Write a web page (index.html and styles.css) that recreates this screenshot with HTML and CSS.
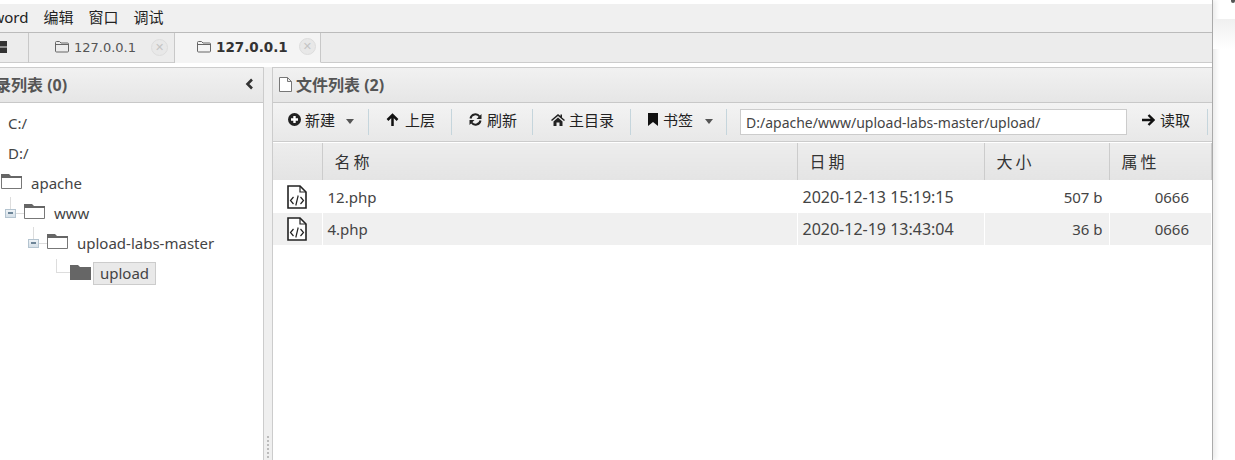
FILE: index.html
```html
<!DOCTYPE html>
<html lang="zh-cn">
<head>
    <meta charset="UTF-8">
    <title>AntSword</title>
    <link rel="stylesheet" href="styles.css">
</head>
<body>
    <svg class="defs" width="0" height="0">
        <symbol id="i-folder" viewBox="0 0 21 16"><path d="M.5 15.500V1.500h7l2 2h11v12z" fill="#fff" stroke="#777"/><path d="M0 1h8l2 2h11v2H0z" fill="#666"/></symbol>
        <symbol id="i-folder-full" viewBox="0 0 21 16"><path d="M0 1h8l2 2h11v13H0z" fill="#666"/></symbol>
        <symbol id="i-tab-folder" viewBox="0 0 14 12"><path d="M.5 10V1.500q0-1 1-1h3l1.500 1.500h6.500q1 0 1 1V10q0 1-1 1h-11q-1 0-1-1zM.5 3.500H13" fill="none" stroke="#666"/></symbol>
        <symbol id="i-code" viewBox="0 0 20 24"><path d="M1 1h12l6 6v16H1z" fill="#fff" stroke="#222" stroke-width="1.600"/><path d="M13 1v6h6" fill="none" stroke="#222" stroke-width="1.200"/><path d="M6.500 12l-3 3.500 3 3.500M13.500 12l3 3.500-3 3.500M11.200 10.500l-2.400 10" fill="none" stroke="#222" stroke-width="1.200"/></symbol>
    </svg>

    <div class="corner"></div>
    <div class="side-strip"></div>
    <div class="app">
        <div class="menubar">
            <span class="menu-item menu-first">AntSword</span>
            <span class="menu-item">编辑</span>
            <span class="menu-item">窗口</span>
            <span class="menu-item">调试</span>
        </div>

        <div class="tabbar">
            <div class="tab tab-home">
                <svg width="7" height="12" viewBox="0 0 7 12"><path d="M0 0h7v5.500H0zM0 6.500h7V12H0z" fill="#333"/></svg>
            </div>
            <div class="tab tab-plain">
                <svg class="tab-icon" width="14" height="12"><use href="#i-tab-folder"/></svg>
                <span>127.0.0.1</span>
                <span class="tab-close">✕</span>
            </div>
            <div class="tab tab-active">
                <svg class="tab-icon" width="14" height="12"><use href="#i-tab-folder"/></svg>
                <b>127.0.0.1</b>
                <span class="tab-close">✕</span>
            </div>
        </div>

        <div class="workspace">
            <div class="panel-left">
                <div class="panel-head head-left">
                    <span>目录列表 (0)</span>
                    <svg class="collapse" width="9" height="12" viewBox="0 0 9 12"><path d="M7 1.500L2.500 6 7 10.500" fill="none" stroke="#333" stroke-width="2.600"/></svg>
                </div>
                <div class="tree">
                    <div class="drive">C:/</div>
                    <div class="drive">D:/</div>
                    <div class="node">
                        <svg class="folder" width="21" height="16"><use href="#i-folder"/></svg>
                        <span class="node-name">apache</span>
                    </div>
                    <div class="node level-1">
                        <span class="joint"></span>
                        <svg class="folder" width="21" height="16"><use href="#i-folder"/></svg>
                        <span class="node-name">www</span>
                    </div>
                    <div class="node level-2">
                        <span class="joint"></span>
                        <svg class="folder" width="21" height="16"><use href="#i-folder"/></svg>
                        <span class="node-name">upload-labs-master</span>
                    </div>
                    <div class="node level-3">
                        <span class="elbow"></span>
                        <svg class="folder" width="21" height="16"><use href="#i-folder-full"/></svg>
                        <span class="node-name node-selected">upload</span>
                    </div>
                </div>
            </div>

            <div class="splitter"><span class="grip"></span></div>

            <div class="panel-right">
                <div class="panel-head head-right">
                    <svg width="13" height="15" viewBox="0 0 13 15"><path d="M.5.500h8l4 4v10H.5zM8.500.500v4h4" fill="#fff" stroke="#777"/></svg>
                    <span>文件列表 (2)</span>
                </div>

                <div class="toolbar">
                    <div class="tool tool-new">
                        <svg width="13" height="13" viewBox="0 0 13 13"><circle cx="6.500" cy="6.500" r="6.500" fill="#222"/><path d="M6.500 3v7M3 6.500h7" stroke="#fff" stroke-width="2.400"/></svg>
                        <span>新建</span>
                        <i class="caret"></i>
                    </div>
                    <div class="tool tool-up">
                        <svg width="13" height="13" viewBox="0 0 13 13"><path d="M6.500 13V2M1.500 7l5-5 5 5" fill="none" stroke="#111" stroke-width="2.500"/></svg>
                        <span>上层</span>
                    </div>
                    <div class="tool tool-refresh">
                        <svg width="13" height="13" viewBox="0 0 13 13"><path d="M1.500 5.500A5 5 0 0 1 10.500 3.500M11.500 7.500A5 5 0 0 1 2.500 9.500" fill="none" stroke="#222" stroke-width="2"/><path d="M12.500 1v5h-5zM.5 12V7h5z" fill="#222"/></svg>
                        <span>刷新</span>
                    </div>
                    <div class="tool tool-home">
                        <svg width="14" height="12" viewBox="0 0 14 12"><path d="M7 0L0 6l1 1 6-5 6 5 1-1-3-2.600V.5H9.500v1.500zM2.500 7.500L7 3.500l4.500 4V12H8.500V8.500h-3V12h-3z" fill="#222"/></svg>
                        <span>主目录</span>
                    </div>
                    <div class="tool tool-mark">
                        <svg width="10" height="13" viewBox="0 0 10 13"><path d="M0 0h10v13L5 9l-5 4z" fill="#111"/></svg>
                        <span>书签</span>
                        <i class="caret"></i>
                    </div>
                    <input class="path-input" type="text" value="D:/apache/www/upload-labs-master/upload/">
                    <div class="tool tool-read">
                        <svg width="13" height="12" viewBox="0 0 13 12"><path d="M0 6h11M6.500 1l5 5-5 5" fill="none" stroke="#111" stroke-width="2.400"/></svg>
                        <span>读取</span>
                    </div>
                </div>

                <table class="grid">
                    <thead>
                        <tr>
                            <th class="col-icon"></th>
                            <th class="col-name">名称</th>
                            <th class="col-date">日期</th>
                            <th class="col-size">大小</th>
                            <th class="col-attr">属性</th>
                        </tr>
                    </thead>
                    <tbody>
                        <tr>
                            <td class="cell-icon"><svg width="20" height="24"><use href="#i-code"/></svg></td>
                            <td class="cell-name">12.php</td>
                            <td class="cell-date">2020-12-13 15:19:15</td>
                            <td class="cell-size">507 b</td>
                            <td class="cell-attr">0666</td>
                        </tr>
                        <tr class="row-alt">
                            <td class="cell-icon"><svg width="20" height="24"><use href="#i-code"/></svg></td>
                            <td class="cell-name">4.php</td>
                            <td class="cell-date">2020-12-19 13:43:04</td>
                            <td class="cell-size">36 b</td>
                            <td class="cell-attr">0666</td>
                        </tr>
                    </tbody>
                </table>
            </div>
        </div>
    </div>
</body>
</html>
```

FILE: styles.css
```css
html, body {
    margin: 0;
    padding: 0;
    height: 100%;
    overflow: hidden;
    background-color: #fff;
}

body {
    font-family: "Noto Sans", "Noto Sans CJK SC", sans-serif;
    font-size: 15px;
    color: #333;
}

.defs {
    position: absolute;
}

.corner {
    position: absolute;
    top: 0;
    left: 1231px;
    width: 4px;
    height: 3px;
    border-radius: 0 0 3px 3px;
    background-color: #555;
}

.side-strip {
    position: absolute;
    top: 19px;
    left: 1213px;
    width: 22px;
    height: 30px;
    background: linear-gradient(#f0f0f0, #fff);
}

.app {
    width: 1212px;
    height: 456px;
    padding-top: 4px;
    border-right: 1px solid #aaa;
    box-shadow: 3px 0 5px rgba(0,0,0,0.08);
    overflow: hidden;
    display: flex;
    flex-direction: column;
}

/* menu */
.menubar {
    height: 28px;
    display: flex;
    align-items: center;
    background-color: #f0f0f0;
    border-bottom: 1px solid #bbb;
    color: #222;
}

.menu-item {
    margin-right: 15px;
    margin-bottom: 2px;
    line-height: 26px;
}

.menu-first {
    margin-left: -40px;
}

/* tabs */
.tabbar {
    height: 29px;
    display: flex;
    background-color: #ececec;
    border-bottom: 1px solid #ccc;
}

.tab {
    display: flex;
    align-items: center;
    box-sizing: border-box;
    height: 30px;
    padding-bottom: 2px;
    border-right: 1px solid #c8c8c8;
    font-family: "DejaVu Sans", "Noto Sans CJK SC", sans-serif;
    font-size: 13px;
}

.tab-home {
    width: 29px;
}

.tab-plain {
    width: 146px;
    padding-left: 26px;
    color: #555;
}

.tab-active {
    width: 146px;
    padding-left: 22px;
    background-color: #f4f4f4;
    border-bottom: 1px solid #f4f4f4;
    color: #333;
    font-size: 13.500px;
}

.tab-icon {
    margin-right: 5px;
}

.tab-close {
    width: 15px;
    height: 15px;
    margin-left: 15px;
    border: 1px solid #ddd;
    border-radius: 50%;
    background-color: #e8e8e8;
    color: #c4c4c4;
    font-size: 11px;
    font-weight: bold;
    line-height: 15px;
    text-align: center;
}

.tab-active .tab-close {
    margin-left: 11px;
}

/* panels */
.workspace {
    flex: 1;
    display: flex;
    margin-top: 4px;
    min-height: 0;
}

.panel-left {
    width: 264px;
    flex-shrink: 0;
    border-right: 1px solid #ccc;
    box-sizing: border-box;
    overflow: hidden;
}

.panel-head {
    height: 32px;
    padding-bottom: 2px;
    display: flex;
    align-items: center;
    background: linear-gradient(#f1f1f1, #e6e6e6);
    border-top: 1px solid #ccc;
    border-bottom: 1px solid #c8c8c8;
    color: #555;
    font-weight: bold;
    font-size: 16px;
}

.head-left {
    justify-content: space-between;
    padding-right: 9px;
    margin-left: -21px;
}

.head-right {
    padding-left: 6px;
    gap: 4px;
}

.splitter {
    width: 8px;
    flex-shrink: 0;
    background-color: #efefef;
    position: relative;
}

.grip {
    position: absolute;
    left: 3px;
    bottom: 2px;
    width: 2px;
    height: 22px;
    background: repeating-linear-gradient(#bbb 0 2px, transparent 2px 4px);
}

.panel-right {
    flex: 1;
    min-width: 0;
    border-left: 1px solid #ccc;
    overflow: hidden;
}

/* tree */
.tree {
    padding-top: 5px;
    color: #444;
}

.drive {
    height: 30px;
    line-height: 30px;
    padding-left: 8px;
}

.node {
    height: 30px;
    display: flex;
    align-items: center;
    padding-left: 1px;
}

.folder {
    flex-shrink: 0;
    margin-right: 9px;
    margin-top: -4px;
}

.level-1 {
    padding-left: 24px;
}

.level-2 {
    padding-left: 47px;
}

.level-3 {
    padding-left: 70px;
}

.level-3 .folder {
    margin-right: 2px;
    margin-top: -2px;
}

.node-selected {
    padding: 0 6px;
    height: 21px;
    line-height: 21px;
    background-color: #e9e9e9;
    border: 1px solid #ccc;
}

.joint {
    position: relative;
    width: 9px;
    height: 7px;
    margin-left: -19px;
    margin-right: 8px;
    border: 1px solid #b4c4d0;
    background: linear-gradient(#6d8598, #6d8598) center / 5px 2px no-repeat, linear-gradient(#eef3f7, #d5dfe7);
}

.joint::before {
    content: "";
    position: absolute;
    left: 10px;
    top: 3px;
    width: 8px;
    height: 1px;
    background-color: #ddd;
}

.joint::after {
    content: "";
    position: absolute;
    left: 4px;
    top: -13px;
    width: 1px;
    height: 12px;
    background-color: #ddd;
}

.elbow {
    width: 14px;
    height: 14px;
    margin-left: -14px;
    margin-top: -14px;
    border-left: 1px solid #ddd;
    border-bottom: 1px solid #ddd;
    box-sizing: border-box;
}

/* toolbar */
.toolbar {
    height: 38px;
    display: flex;
    align-items: center;
    background: linear-gradient(#f3f3f3, #e8e8e8);
    border-bottom: 1px solid #ccc;
    margin-bottom: 1px;
}

.tool {
    height: 26px;
    display: flex;
    align-items: center;
    gap: 5px;
    box-sizing: border-box;
    padding-bottom: 5px;
    border-right: 1px solid #c5d5dc;
    color: #222;
    flex-shrink: 0;
}

.tool-new {
    width: 96px;
    padding-left: 15px;
    gap: 4px;
}

.tool-up {
    width: 83px;
    padding-left: 17px;
    gap: 6px;
}

.tool-refresh {
    width: 81px;
    padding-left: 17px;
}

.tool-home {
    width: 98px;
    padding-left: 18px;
    gap: 4px;
}

.tool-mark {
    width: 96px;
    padding-left: 17px;
    gap: 5px;
}

.tool-read {
    width: 81px;
    padding-left: 15px;
}

.caret {
    width: 0;
    height: 0;
    margin-left: 7px;
    margin-top: 4px;
    border-left: 4.500px solid transparent;
    border-right: 4.500px solid transparent;
    border-top: 5px solid #555;
}

.path-input {
    width: 387px;
    height: 26px;
    margin-left: 13px;
    padding: 0 5px;
    box-sizing: border-box;
    border: 1px solid #ccc;
    background-color: #fff;
    font-family: inherit;
    font-size: 14px;
    color: #444;
    outline: none;
    flex-shrink: 0;
}

/* grid */
.grid {
    width: 939px;
    border-collapse: collapse;
    table-layout: fixed;
    color: #444;
}

.grid th {
    height: 37px;
    padding: 0 0 2px 12px;
    text-align: left;
    font-weight: normal;
    font-size: 16px;
    letter-spacing: 3px;
    color: #333;
    background: linear-gradient(#ededed, #e4e4e4);
    border-right: 1px solid #ccc;
    box-sizing: border-box;
}

.grid .col-icon {
    width: 49px;
}

.grid .col-name {
    width: 475px;
}

.grid .col-date {
    width: 187px;
}

.grid .col-size {
    width: 125px;
}

.grid td {
    height: 33px;
    padding: 0 0 0 5px;
    border-right: 1px solid #fff;
    box-sizing: border-box;
}

.row-alt td {
    background-color: #f0f0f0;
    height: 32px;
}

.grid .cell-icon {
    padding: 0 0 0 14px;
    vertical-align: middle;
}

.cell-icon svg {
    display: block;
}

.grid .cell-date {
    font-size: 16px;
}

.grid .cell-size {
    padding: 0 6px 0 0;
    text-align: right;
}

.grid .cell-attr {
    padding: 0 22px 0 0;
    text-align: right;
}
```
